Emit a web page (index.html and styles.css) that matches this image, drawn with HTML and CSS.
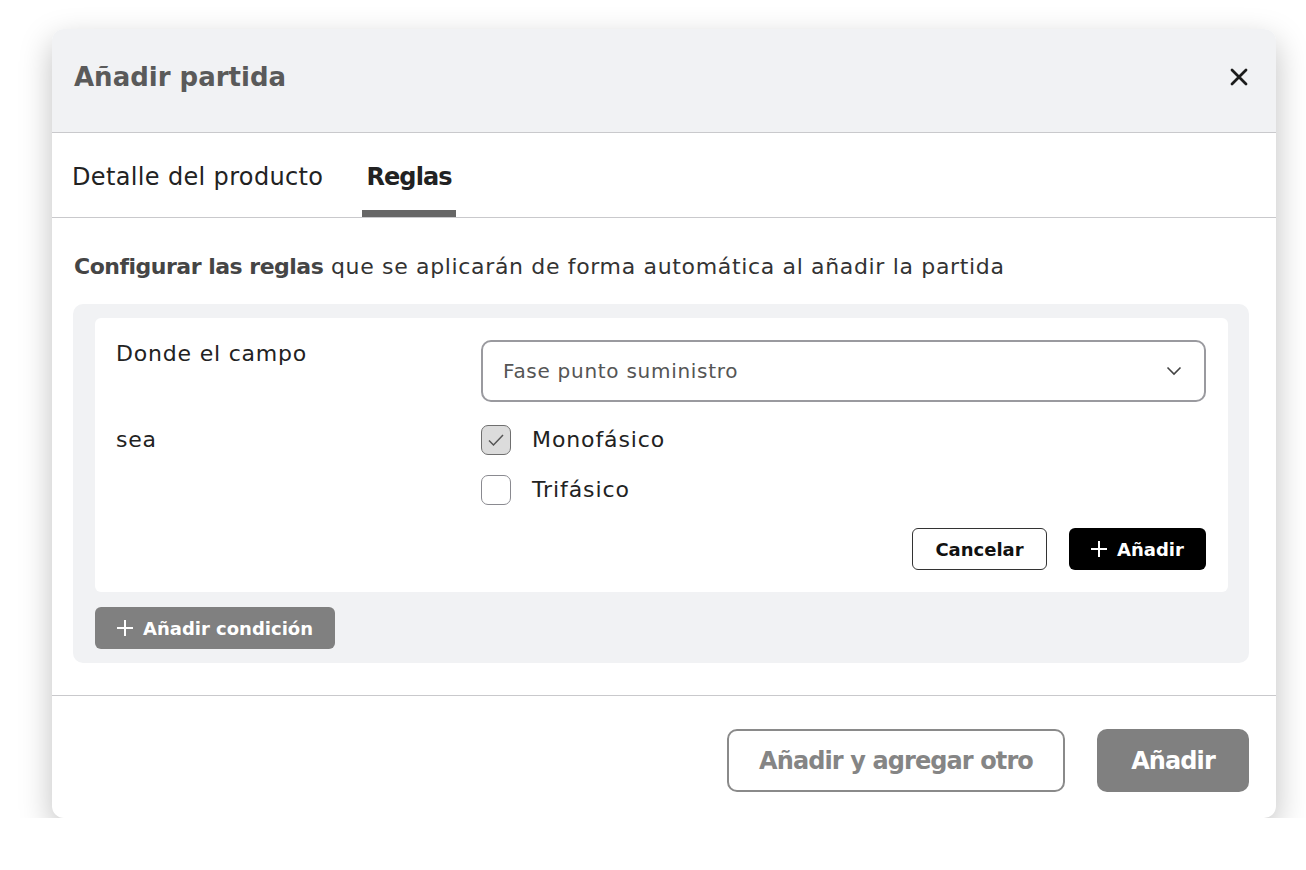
FILE: index.html
```html
<!DOCTYPE html>
<html lang="es">
<head>
  <meta charset="UTF-8">
  <meta name="viewport" content="width=device-width, initial-scale=1.0">
  <title>Añadir partida</title>
  <link rel="stylesheet" href="styles.css">
</head>
<body>
  <div class="modal">
    <div class="modal-header">
      <h2 class="modal-title">Añadir partida</h2>
      <button class="close-btn" aria-label="Cerrar">
        <svg width="18" height="18" viewBox="0 0 18 18"><path d="M2 2L16 16M16 2L2 16" stroke="#1c1c1c" stroke-width="2.8" stroke-linecap="round"/></svg>
      </button>
    </div>
    <div class="tabs">
      <div class="tab">Detalle del producto</div>
      <div class="tab active">Reglas</div>
    </div>
    <div class="modal-body">
      <p class="intro"><b>Configurar las reglas</b> que se aplicarán de forma automática al añadir la partida</p>
      <div class="rules-panel">
        <div class="rule-card">
          <div class="rule-row">
            <div class="rule-label">Donde el campo</div>
            <div class="select">
              <span>Fase punto suministro</span>
              <svg width="16" height="10" viewBox="0 0 16 10"><path d="M1.5 1.5L8 8L14.5 1.5" fill="none" stroke="#444" stroke-width="1.6"/></svg>
            </div>
          </div>
          <div class="rule-row values">
            <div class="rule-label">sea</div>
            <div class="options">
              <label class="option">
                <span class="checkbox checked">
                  <svg width="20" height="20" viewBox="0 0 20 20"><path d="M3 10.5L7.5 15L17 5" fill="none" stroke="#555" stroke-width="1.5"/></svg>
                </span>
                Monofásico
              </label>
              <label class="option">
                <span class="checkbox"></span>
                Trifásico
              </label>
            </div>
          </div>
          <div class="card-actions">
            <button class="btn-small outline">Cancelar</button>
            <button class="btn-small dark">
              <svg class="plus" width="16" height="16" viewBox="0 0 16 16"><path d="M8 0V16M0 8H16" stroke="#fff" stroke-width="2"/></svg>
              Añadir
            </button>
          </div>
        </div>
        <button class="btn-small gray">
          <svg class="plus" width="16" height="16" viewBox="0 0 16 16"><path d="M8 0V16M0 8H16" stroke="#fff" stroke-width="2"/></svg>
          Añadir condición
        </button>
      </div>
    </div>
    <div class="modal-footer">
      <button class="btn-large outline">Añadir y agregar otro</button>
      <button class="btn-large gray">Añadir</button>
    </div>
  </div>
</body>
</html>
```

FILE: styles.css
```css
body {
  margin: 0;
  background: #fff;
  font-family: "DejaVu Sans", Inter, sans-serif;
  color: #222;
}
.modal {
  width: 1224px;
  margin: 29px 0 0 52px;
  background: #fff;
  border-radius: 12px;
  box-shadow: 0 12px 32px rgba(0, 0, 0, 0.25);
  overflow: hidden;
}
.modal-header {
  height: 104px;
  background: #f1f2f4;
  border-bottom: 1px solid #c9c9cc;
  display: flex;
  align-items: center;
  justify-content: space-between;
  padding: 0 28px 8px 22px;
  box-sizing: border-box;
}
.modal-title {
  margin: 0;
  font-size: 26px;
  font-weight: 600;
  color: #5a5a5a;
}
.close-btn {
  border: none;
  background: none;
  padding: 0;
  display: flex;
  cursor: pointer;
}
.tabs {
  height: 85px;
  display: flex;
  gap: 39px;
  padding-left: 20px;
  border-bottom: 1px solid #c9c9cc;
  box-sizing: border-box;
}
.tab {
  display: flex;
  align-items: center;
  font-size: 24px;
  letter-spacing: 0.35px;
  color: #222;
  padding: 10px 4px 0;
  border-bottom: 7px solid transparent;
}
.tab:first-child { padding: 10px 0 0; }
.tab.active {
  font-weight: 600;
  letter-spacing: -0.9px;
  border-bottom-color: #666;
}
.modal-body {
  padding: 0 27px 0 21px;
}
.intro {
  margin: 0;
  padding: 36px 0 24px 1px;
  font-size: 22px;
  letter-spacing: 0.66px;
  color: #333;
  line-height: 26px;
}
.intro b {
  color: #454545;
  font-weight: 700;
  letter-spacing: -0.5px;
}
.rules-panel {
  background: #f1f2f4;
  border-radius: 10px;
  padding: 14px 21px 14px 22px;
}
.rule-card {
  background: #fff;
  border-radius: 6px;
  padding: 22px 22px 22px 21px;
}
.rule-row {
  display: flex;
}
.rule-label {
  width: 365px;
  font-size: 22px;
  letter-spacing: 0.8px;
  line-height: 28px;
}
.select {
  flex: 1;
  height: 62px;
  border: 2px solid #9a9a9f;
  border-radius: 10px;
  box-sizing: border-box;
  display: flex;
  align-items: center;
  justify-content: space-between;
  padding: 0 22px 0 20px;
  font-size: 20px;
  letter-spacing: 0.72px;
  color: #555;
}
.values {
  margin-top: 23px;
}
.values .rule-label {
  line-height: 30px;
}
.options {
  display: flex;
  flex-direction: column;
  gap: 20px;
}
.option {
  display: flex;
  align-items: center;
  gap: 21px;
  font-size: 22px;
  letter-spacing: 0.9px;
  line-height: 30px;
}
.checkbox {
  width: 30px;
  height: 30px;
  box-sizing: border-box;
  border: 1.5px solid #8a8a90;
  border-radius: 7px;
  display: flex;
  align-items: center;
  justify-content: center;
}
.checkbox.checked {
  background: #dcdcdc;
  border-color: #6f6f6f;
}
.card-actions {
  display: flex;
  justify-content: flex-end;
  gap: 22px;
  margin-top: 23px;
}
.btn-small {
  height: 42px;
  border-radius: 6px;
  font-family: inherit;
  font-size: 18px;
  font-weight: 600;
  padding: 0;
  box-sizing: border-box;
  display: flex;
  align-items: center;
  justify-content: center;
  gap: 10px;
  cursor: pointer;
}
.btn-small.outline {
  background: #fff;
  border: 1px solid #333;
  color: #111;
  width: 135px;
}
.btn-small.dark {
  background: #000;
  border: none;
  color: #fff;
  width: 137px;
}
.btn-small.gray {
  background: #808080;
  border: none;
  color: #fff;
  margin-top: 15px;
  width: 240px;
}
.modal-footer {
  margin-top: 32px;
  border-top: 1px solid #c9c9cc;
  display: flex;
  justify-content: flex-end;
  gap: 32px;
  padding: 33px 27px 26px;
}
.btn-large {
  height: 63px;
  border-radius: 10px;
  font-family: inherit;
  font-size: 24px;
  font-weight: 600;
  letter-spacing: -0.9px;
  box-sizing: border-box;
  cursor: pointer;
}
.btn-large.outline {
  width: 338px;
  background: #fff;
  border: 2px solid #8a8a8a;
  color: #858585;
}
.btn-large.gray {
  width: 152px;
  background: #808080;
  border: none;
  color: #fff;
}
```
